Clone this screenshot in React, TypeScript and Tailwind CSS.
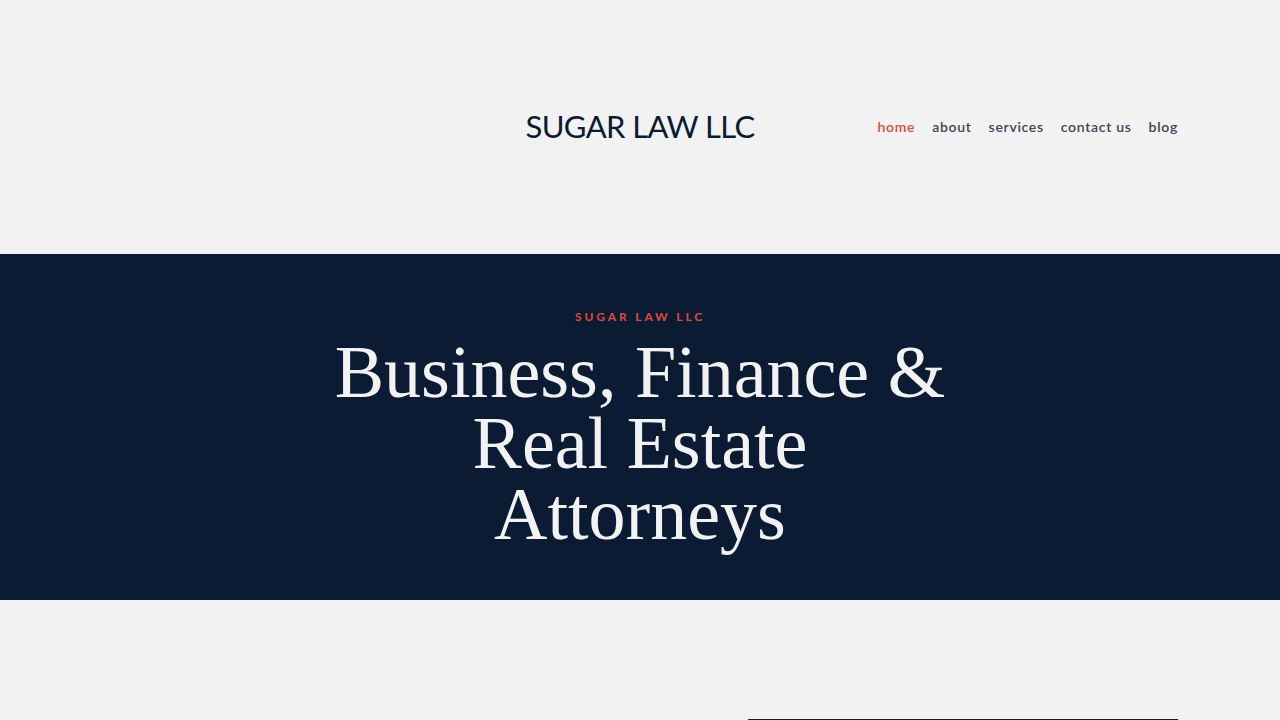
const navItems = [
  { label: 'home', active: true },
  { label: 'about' },
  { label: 'services' },
  { label: 'contact us' },
  { label: 'blog' },
];

const sans = "font-['Lato','Liberation_Sans',sans-serif]";

export default function App() {
  return (
    <div className="min-h-screen bg-[#f2f2f2]">
      <header className="grid h-[254px] grid-cols-[1fr_auto_1fr] items-center px-[102px]">
        <div />
        <a
          href="#"
          className={`${sans} pb-[2px] text-[31px] font-normal leading-none tracking-[-0.02em] text-[#0b1b33]`}
        >
          SUGAR LAW LLC
        </a>
        <nav className="flex justify-end gap-[17px] pb-[2px]">
          {navItems.map((item) => (
            <a
              key={item.label}
              href="#"
              className={`${sans} text-[14px] font-semibold tracking-[0.05em] ${
                item.active ? 'text-[#e0493a]' : 'text-[#3b4657]'
              }`}
            >
              {item.label}
            </a>
          ))}
        </nav>
      </header>

      <section className="flex h-[346px] flex-col items-center bg-[#0b1b33] pt-[57px] text-center">
        <p className={`${sans} text-[12px] font-bold uppercase leading-none tracking-[0.24em] text-[#e0493a]`}>
          Sugar Law LLC
        </p>
        <h1 className="mt-[14px] font-['Liberation_Serif',serif] text-[74px] leading-[71px] font-normal text-[#f2f2f2]">
          Business, Finance &amp;
          <br />
          Real Estate
          <br />
          Attorneys
        </h1>
      </section>

      <section className="grid grid-cols-[1fr_430px] px-[102px] pt-[119px]">
        <div />
        <div className="h-[300px] bg-[#1e1e1e]" />
      </section>
    </div>
  );
}
